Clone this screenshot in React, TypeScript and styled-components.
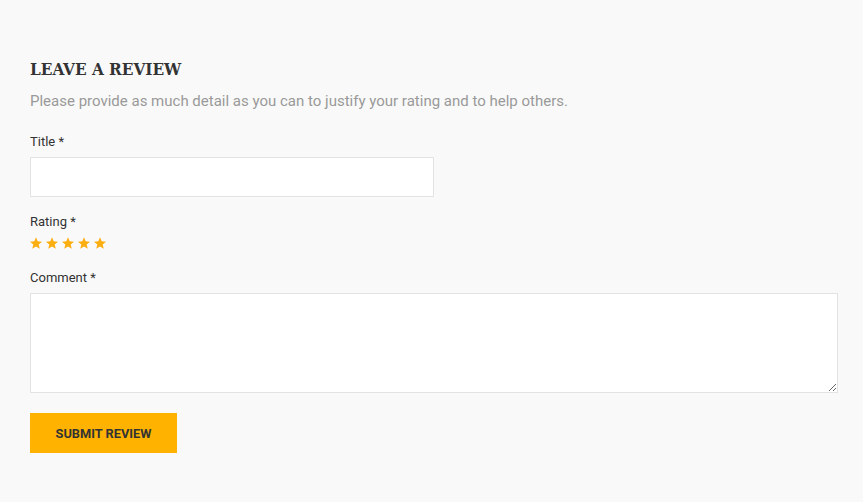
import React from "react";
import styled, { createGlobalStyle } from "styled-components";

const Global = createGlobalStyle`
  html, body { margin: 0; padding: 0; background: #f9f9f9; }
  body { font-family: Roboto, "Noto Sans", sans-serif; color: #333; }
  * { box-sizing: border-box; }
`;

const Page = styled.div`
  padding: 58px 25px 40px 30px;
  display: flex;
  flex-direction: column;
`;

const Heading = styled.h2`
  margin: 0;
  font-family: "DejaVu Serif Condensed", "DejaVu Serif", "Liberation Serif", serif;
  font-weight: 700;
  font-size: 17px;
  line-height: 22px;
  color: #333;
`;

const Intro = styled.p`
  margin: 10px 0 0;
  font-size: 15px;
  line-height: 22px;
  color: #999;
`;

const Field = styled.div<{ $top: number }>`
  display: flex;
  flex-direction: column;
  margin-top: ${(p) => p.$top}px;
`;

const Label = styled.label`
  font-size: 13px;
  line-height: 18px;
  color: #333;
`;

const Input = styled.input`
  margin-top: 6px;
  width: 404px;
  height: 40px;
  border: 1px solid #e3e3e3;
  background: #fff;
  outline: none;
`;

const TextArea = styled.textarea`
  margin-top: 6px;
  width: 808px;
  height: 100px;
  border: 1px solid #e3e3e3;
  background: #fff;
  outline: none;
  display: block;
`;

const Stars = styled.div`
  display: flex;
  gap: 4px;
  margin-top: 6px;
`;

const Button = styled.button`
  margin-top: 20px;
  align-self: flex-start;
  width: 147px;
  height: 40px;
  background: #ffb300;
  border: none;
  font-family: Roboto, sans-serif;
  font-weight: 700;
  font-size: 12.8px;
  color: #333;
  text-transform: uppercase;
`;

const Star = () => (
  <svg width="12" height="12" viewBox="1 1 22 21">
    <polygon
      fill="#fbae12"
      points="12,1 15.1,8.3 23,9 17,14.3 18.8,22 12,18 5.2,22 7,14.3 1,9 8.9,8.3"
    />
  </svg>
);

export default function App() {
  return (
    <>
      <Global />
      <Page>
        <Heading>LEAVE A REVIEW</Heading>
        <Intro>Please provide as much detail as you can to justify your rating and to help others.</Intro>
        <Field $top={21}>
          <Label>Title *</Label>
          <Input type="text" />
        </Field>
        <Field $top={16}>
          <Label>Rating *</Label>
          <Stars>
            {[0, 1, 2, 3, 4].map((i) => (
              <Star key={i} />
            ))}
          </Stars>
        </Field>
        <Field $top={20}>
          <Label>Comment *</Label>
          <TextArea />
        </Field>
        <Button>Submit Review</Button>
      </Page>
    </>
  );
}
